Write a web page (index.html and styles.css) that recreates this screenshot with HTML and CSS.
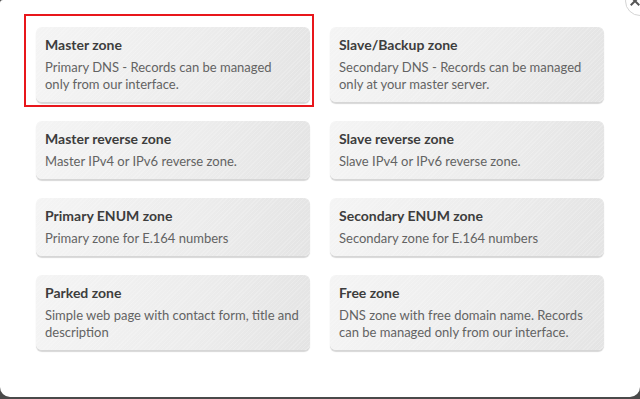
FILE: index.html
```html
<!DOCTYPE html>
<html lang="en">

<head>
  <meta charset="UTF-8" />
  <meta name="viewport" content="width=device-width, initial-scale=1.0" />
  <title>Add zone</title>
  <link rel="stylesheet" href="styles.css">
</head>

<body>
  <div class="modal">
    <span class="close"><i></i></span>
    <div class="zones">
      <div class="zone selected">
        <p class="name">Master zone</p>
        <p class="desc">Primary DNS - Records can be managed<br>only from our interface.</p>
      </div>
      <div class="zone">
        <p class="name">Slave/Backup zone</p>
        <p class="desc">Secondary DNS - Records can be managed only at your master server.</p>
      </div>
      <div class="zone">
        <p class="name">Master reverse zone</p>
        <p class="desc">Master IPv4 or IPv6 reverse zone.</p>
      </div>
      <div class="zone">
        <p class="name">Slave reverse zone</p>
        <p class="desc">Slave IPv4 or IPv6 reverse zone.</p>
      </div>
      <div class="zone">
        <p class="name">Primary ENUM zone</p>
        <p class="desc">Primary zone for E.164 numbers</p>
      </div>
      <div class="zone">
        <p class="name">Secondary ENUM zone</p>
        <p class="desc">Secondary zone for E.164 numbers</p>
      </div>
      <div class="zone">
        <p class="name">Parked zone</p>
        <p class="desc">Simple web page with contact form, title and description</p>
      </div>
      <div class="zone">
        <p class="name">Free zone</p>
        <p class="desc">DNS zone with free domain name. Records can be managed only from our interface.</p>
      </div>
    </div>
  </div>
</body>

</html>
```

FILE: styles.css
```css
body {
  margin: 0;
  background-color: #4a4a4a;
  font-family: "Lato", "Open Sans", sans-serif;
}

.modal {
  position: relative;
  height: 397px;
  background-color: #fff;
  border-radius: 3px 0 10px 10px;
  padding: 27px 36px 0;
  box-sizing: border-box;
  overflow: hidden;
}

.close {
  position: absolute;
  top: -14px;
  right: -15px;
  width: 28px;
  height: 28px;
  border: 1px solid #d4d4d4;
  border-radius: 50%;
  background-color: #fff;
}

.close i,
.close i:before {
  position: absolute;
  left: 3px;
  top: 13px;
  width: 12px;
  height: 2px;
  background-color: #555;
  transform: rotate(-45deg);
}

.close i:before {
  content: '';
  left: 0;
  top: 0;
  transform: rotate(90deg);
}

.zones {
  display: grid;
  grid-template-columns: 274px 274px;
  column-gap: 20px;
  row-gap: 19px;
}

.zone {
  position: relative;
  padding: 9px 6px 9px 9px;
  border-radius: 6px;
  background:
    repeating-linear-gradient(135deg, rgba(255, 255, 255, 0.18) 0 1px, transparent 1px 3px),
    linear-gradient(100deg, #f4f4f4 0%, #ececec 60%, #e4e4e4 100%);
  box-shadow: 0 2px 1px rgba(0, 0, 0, 0.16);
}

.zone.selected:after {
  content: '';
  position: absolute;
  left: -12px;
  top: -13px;
  right: -4px;
  bottom: -5px;
  border: 2px solid #e8161b;
}

.zone p {
  margin: 0;
}

.zone .name {
  font-size: 14px;
  font-weight: 700;
  line-height: 18px;
  color: #3d3d3d;
  margin-bottom: 5px;
}

.zone .desc {
  font-size: 13px;
  line-height: 17px;
  color: #636363;
}
```
